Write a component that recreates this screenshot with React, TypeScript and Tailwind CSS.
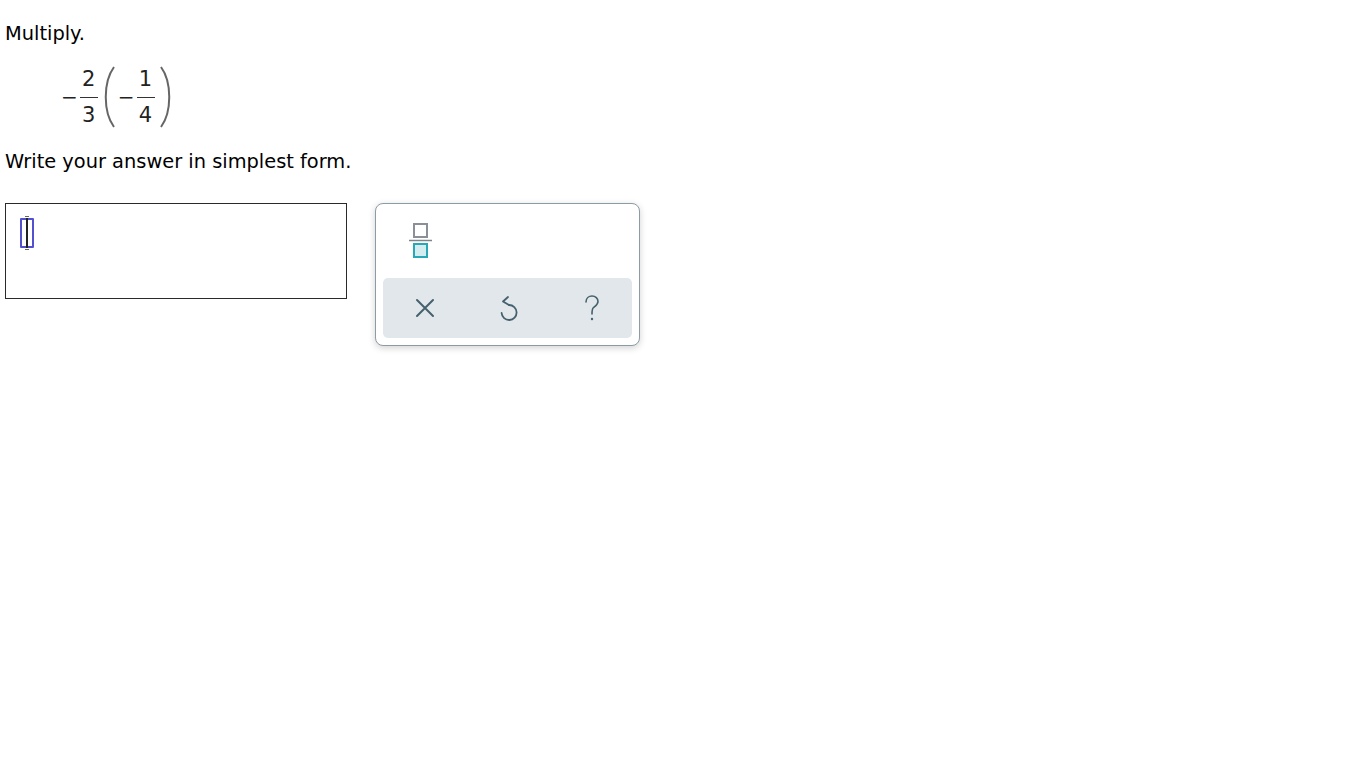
import React from 'react';

const Fraction: React.FC<{ num: string; den: string }> = ({ num, den }) => (
  <span className="inline-flex flex-col items-center leading-none mx-[2px]">
    <span className="text-[21px] pb-[7px]">{num}</span>
    <span className="block w-[18px] h-px bg-[#333]"></span>
    <span className="text-[21px] pt-[7px]">{den}</span>
  </span>
);

const Paren: React.FC<{ side: 'l' | 'r' }> = ({ side }) => (
  <svg width="14" height="64" viewBox="0 0 14 64" className="block mx-[2px]">
    {side === 'l' ? (
      <path d="M12 2 C1 17 1 47 12 62" stroke="#666" strokeWidth="2" fill="none" />
    ) : (
      <path d="M2 2 C13 17 13 47 2 62" stroke="#666" strokeWidth="2" fill="none" />
    )}
  </svg>
);

const App: React.FC = () => {
  return (
    <div className="min-h-screen bg-white text-black font-['DejaVu_Sans',Verdana,sans-serif]">
      <div className="pl-[5px] pt-[22px]">
        <p className="text-[19.4px] leading-[24px]">Multiply.</p>

        {/* expression */}
        <div className="flex items-center ml-[56px] mt-[19px] h-[64px] text-[#222]">
          <span className="text-[20px]">&minus;</span>
          <Fraction num="2" den="3" />
          <Paren side="l" />
          <span className="text-[20px]">&minus;</span>
          <Fraction num="1" den="4" />
          <Paren side="r" />
        </div>

        <p className="text-[19.4px] leading-[24px] mt-[21px]">Write your answer in simplest form.</p>

        <div className="flex items-start gap-[28px] mt-[29px]">
          {/* answer box */}
          <div className="w-[342px] h-[96px] border-[1.5px] border-[#2a2a2a] relative">
            <div className="absolute left-[14px] top-[12px] w-[14px] h-[34px]">
              <span className="absolute left-[5px] top-0 w-[4px] h-px bg-[#666]"></span>
              <span className="absolute left-0 top-[2px] w-[14px] h-[30px] border-2 border-[#5252d0] rounded-[1px]"></span>
              <span className="absolute left-[6px] top-[2px] w-[2px] h-[30px] bg-[#222]"></span>
              <span className="absolute left-[5px] bottom-0 w-[4px] h-px bg-[#666]"></span>
            </div>
          </div>

          {/* palette */}
          <div className="w-[265px] h-[143px] rounded-[8px] border border-[#8c9ca4] bg-white shadow-[0_2px_7px_rgba(0,0,0,0.18)] p-[7px] flex flex-col">
            <div className="h-[67px] flex items-start pl-[26px] pt-[10px]">
              <svg width="24" height="38" viewBox="0 0 24 38">
                <rect x="5" y="3" width="13" height="13" fill="none" stroke="#8a9096" strokeWidth="2" />
                <line x1="0" y1="19.5" x2="23" y2="19.5" stroke="#7d8489" strokeWidth="1.5" />
                <rect x="5" y="23" width="13" height="13" fill="#d2ecf0" stroke="#28a8b6" strokeWidth="2" />
              </svg>
            </div>
            <div className="h-[60px] rounded-[5px] bg-[#e1e7ea] flex items-center justify-around">
              <svg width="22" height="22" viewBox="0 0 22 22">
                <path d="M3 3 L19 19 M19 3 L3 19" stroke="#46616e" strokeWidth="2" strokeLinecap="round" />
              </svg>
              <svg width="22" height="28" viewBox="0 0 22 28">
                <path d="M10 3 L5 7.5 L11 11" stroke="#46616e" strokeWidth="1.8" fill="none" strokeLinecap="round" strokeLinejoin="round" />
                <path d="M11 11 A7.5 7.5 0 1 1 3.6 19" stroke="#46616e" strokeWidth="1.8" fill="none" strokeLinecap="round" />
              </svg>
              <svg width="18" height="30" viewBox="0 0 18 30">
                <path d="M3 9 C3 5 6 3 9 3 C12.5 3 15 5.5 15 8.5 C15 11.5 12.5 13 10.5 14.5 C9.3 15.5 9 17 9 21" stroke="#46616e" strokeWidth="1.6" fill="none" strokeLinecap="round" />
                <circle cx="9" cy="26" r="1.2" fill="#46616e" />
              </svg>
            </div>
          </div>
        </div>
      </div>
    </div>
  );
};

export default App;
